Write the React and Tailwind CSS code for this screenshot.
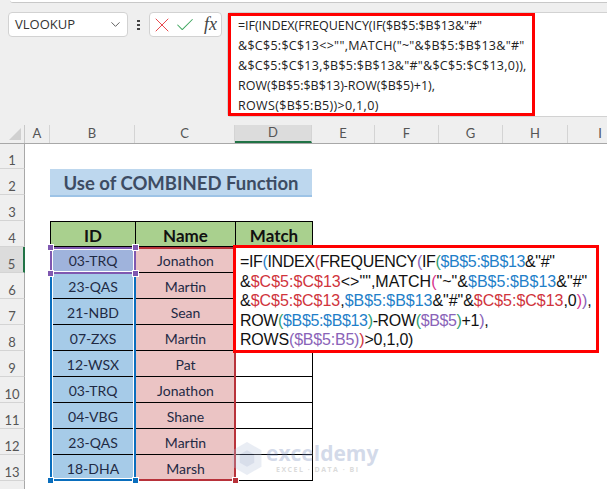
import React from "react";
import { ChevronDown, X, Check } from "lucide-react";

const colHeaders = [
  { label: "A", w: "w-[25px]" },
  { label: "B", w: "w-[85px]" },
  { label: "C", w: "w-[100px]" },
  { label: "D", w: "w-[77px]", active: true },
  { label: "E", w: "w-[63px]" },
  { label: "F", w: "w-[64px]" },
  { label: "G", w: "w-[64px]" },
  { label: "H", w: "w-[65px]" },
  { label: "I", w: "w-[65px]" },
];

const people = [
  ["03-TRQ", "Jonathon"],
  ["23-QAS", "Martin"],
  ["21-NBD", "Sean"],
  ["07-ZXS", "Martin"],
  ["12-WSX", "Pat"],
  ["03-TRQ", "Jonathon"],
  ["04-VBG", "Shane"],
  ["23-QAS", "Martin"],
  ["18-DHA", "Marsh"],
];

const blue = "text-[#1f7fc9]";
const red = "text-[#d0343c]";
const purple = "text-[#8a63b8]";
const green = "text-[#2f9e6e]";
const pink = "text-[#d6308c]";

const barTracks = ["tracking-[-0.05px]", "tracking-[0.28px]", "tracking-[0.27px]", "tracking-[0px]", "tracking-[0.33px]"];
const boxTracks = ["tracking-[-0.35px]", "tracking-[0.02px]", "tracking-[-0.03px]", "tracking-[-0.35px]", "tracking-[-0.2px]"];

// same formula is used in the bar and in the cell box
const Formula = ({ colored, tracks }) => {
  const c = (cls) => (colored ? cls : "");
  return (
    <>
      <div className={tracks[0]}>
        =IF<span className={c(blue)}>(</span>INDEX<span className={c(red)}>(</span>FREQUENCY
        <span className={c(purple)}>(</span>IF<span className={c(green)}>(</span>
        <span className={c(blue)}>$B$5:$B$13</span>&"#"
      </div>
      <div className={tracks[1]}>
        &<span className={c(red)}>$C$5:$C$13</span>&lt;&gt;"",MATCH<span className={c(pink)}>(</span>"~"&
        <span className={c(blue)}>$B$5:$B$13</span>&"#"
      </div>
      <div className={tracks[2]}>
        &<span className={c(red)}>$C$5:$C$13</span>,<span className={c(blue)}>$B$5:$B$13</span>&"#"&
        <span className={c(red)}>$C$5:$C$13</span>,0<span className={c(pink)}>)</span>
        <span className={c(purple)}>)</span>,
      </div>
      <div className={tracks[3]}>
        ROW<span className={c(green)}>(</span>
        <span className={c(blue)}>$B$5:$B$13</span>
        <span className={c(green)}>)</span>-ROW<span className={c(green)}>(</span>
        <span className={c(purple)}>$B$5</span>
        <span className={c(green)}>)</span>+1<span className={c(purple)}>)</span>,
      </div>
      <div className={tracks[4]}>
        ROWS<span className={c(purple)}>(</span>
        <span className={c(purple)}>$B$5:B5</span>
        <span className={c(purple)}>)</span>
        <span className={c(red)}>)</span>&gt;0,1,0)
      </div>
    </>
  );
};

const RowHead = ({ n, h, active }) => (
  <div
    className={`w-[25px] shrink-0 ${h} flex items-center justify-center pt-[10px] border-b border-[#d4d4d4] border-r text-[13px] text-[#555] ${
      active ? "bg-[#dcdcdc] border-r-2 border-r-[#217346]" : "bg-[#efefef] border-r-[#a8a8a8]"
    }`}
  >
    {n}
  </div>
);

const Handle = ({ className, color }) => (
  <div className={`absolute w-[5px] h-[5px] border border-white box-content ${color} ${className}`} />
);

const App = () => {
  return (
    <div className="w-[607px] h-[489px] overflow-hidden bg-white font-['Lato',sans-serif] relative">
      {/* Formula bar */}
      <div className="h-[125px] bg-[#efefef] relative">
        <div className="h-[3px] ml-[10px] bg-white border-b border-[#c8c8c8] rounded-bl" />
        <div className="flex items-start pt-[9px] pl-[8px]">
          <div className="w-[120px] h-[25px] bg-white border border-[#d2d2d2] rounded flex items-center justify-between pl-[6px] pr-[4px] font-['Open_Sans',sans-serif] text-[13px] text-[#333]">
            VLOOKUP
            <ChevronDown className="w-[15px] h-[15px] text-[#555]" strokeWidth={1.5} />
          </div>
          <div className="w-[21px] h-[25px] flex flex-col items-center justify-center gap-[2px]">
            <span className="w-[3px] h-[2px] bg-[#444]" />
            <span className="w-[3px] h-[2px] bg-[#444]" />
            <span className="w-[3px] h-[2px] bg-[#444]" />
          </div>
          <div className="w-[73px] h-[25px] bg-white border border-[#d2d2d2] rounded flex items-center">
            <X className="w-[24px] h-[24px] text-[#e8474c]" strokeWidth={1} />
            <Check className="w-[22px] h-[22px] text-[#3ea65f]" strokeWidth={1.1} />
            <span className="ml-[8px] font-['Liberation_Serif',serif] italic text-[18px] text-[#444]">fx</span>
          </div>
          <div className="ml-[5px] flex-1 h-[105px] bg-white border-y border-l border-[#d2d2d2] rounded-l">
            <div className="w-[307px] h-[103px] border-[3px] border-[#ff0000] pl-[7px] font-['Open_Sans',sans-serif] text-[12.5px] leading-[20px] text-[#222] whitespace-nowrap">
              <Formula colored={false} tracks={barTracks} />
            </div>
          </div>
        </div>
      </div>

      {/* Column headers */}
      <div className="flex h-[19px] bg-[#efefef] border-b border-[#a8a8a8] text-[13px] text-[#555]">
        <div className="w-[25px] shrink-0 border-r border-[#c8c8c8] relative overflow-hidden">
          <div className="absolute right-[3px] bottom-[3px] w-0 h-0 border-l-[12px] border-l-transparent border-b-[12px] border-b-[#d0d0d0]" />
        </div>
        {colHeaders.map((col) => (
          <div
            key={col.label}
            className={`${col.w} shrink-0 flex items-center justify-center border-r border-[#d4d4d4] ${
              col.active ? "bg-[#dcdcdc] border-b-2 border-b-[#217346]" : ""
            }`}
          >
            {col.label}
          </div>
        ))}
      </div>

      {/* Sheet */}
      <div className="relative">
        <div className="flex">
          <RowHead n={1} h="h-[25px]" />
        </div>
        <div className="flex h-[26px] items-start">
          <RowHead n={2} h="h-[26px]" />
          <div className="ml-[25px] w-[262px] h-[28px] pt-[3px] bg-[#bdd7ee] border-b-2 border-[#9dc3e6] flex items-center justify-center font-bold text-[18.5px] text-[#3d4c63] relative z-10">
            Use of COMBINED Function
          </div>
        </div>
        <div className="flex">
          <RowHead n={3} h="h-[26px]" />
        </div>
        <div className="flex">
          <RowHead n={4} h="h-[26px]" />
          <div className="ml-[25px] flex h-[26px] font-bold text-[17px] text-[#111]">
            <div className="w-[86px] pt-[3px] bg-[#a9d08e] border border-black flex items-center justify-center">ID</div>
            <div className="w-[100px] pt-[3px] bg-[#a9d08e] border-y border-r border-black flex items-center justify-center">Name</div>
            <div className="w-[77px] pt-[3px] bg-[#a9d08e] border-y border-r border-black flex items-center justify-center">Match</div>
          </div>
        </div>
        {people.map(([id, name], i) => (
          <div className="flex" key={i}>
            <RowHead n={i + 5} h="h-[26px]" active={i === 0} />
            <div className="ml-[25px] flex h-[26px] text-[14px] text-[#1f2a44]">
              <div className={`w-[86px] pt-[2px] border-x border-b border-black flex items-center justify-center ${i === 0 ? "bg-[#9fb3dc]" : "bg-[#a6cbe8]"}`}>
                {id}
              </div>
              <div className="w-[100px] pt-[2px] bg-[#ebc4c4] border-r border-b border-black flex items-center justify-center">
                {name}
              </div>
              <div className="w-[77px] bg-white border-r border-b border-black" />
            </div>
          </div>
        ))}
        <div className="flex">
          <RowHead n="" h="h-[10px]" />
        </div>

        {/* Range highlights */}
        <div className="absolute left-[50px] top-[103px] w-[86px] h-[234px] border-2 border-[#0a6ebd] shadow-[inset_0_0_0_1px_white]" />
        <div className="absolute left-[136px] top-[103px] w-[100px] h-[234px] border-2 border-[#b8323a] border-l-0" />
        <div className="absolute left-[50px] top-[103px] w-[86px] h-[27px] border-2 border-[#7f58b0] shadow-[inset_0_0_0_1px_white]" />
        <Handle className="left-[47px] top-[100px]" color="bg-[#7f58b0]" />
        <Handle className="left-[132px] top-[100px]" color="bg-[#7f58b0]" />
        <Handle className="left-[47px] top-[126px]" color="bg-[#7f58b0]" />
        <Handle className="left-[132px] top-[126px]" color="bg-[#7f58b0]" />
        <Handle className="left-[47px] top-[333px]" color="bg-[#0a6ebd]" />
        <Handle className="left-[132px] top-[333px]" color="bg-[#0a6ebd]" />
        <Handle className="left-[232px] top-[333px]" color="bg-[#b8323a]" />

        {/* Watermark */}
        <div className="absolute left-[232px] top-[298px] flex items-center gap-[4px] opacity-30 pointer-events-none">
          <svg width="30" height="33" viewBox="0 0 28 32">
            <path d="M14 0 L28 8 V24 L14 32 L0 24 V8 Z" fill="#b8c4de" />
            <path d="M14 8 L21 12 V20 L14 24 L7 20 V12 Z" fill="#7f93bd" />
          </svg>
          <div className="flex flex-col gap-[3px]">
            <span className="font-['Open_Sans',sans-serif] font-bold text-[21px] leading-[20px] text-[#6f86b8]">exceldemy</span>
            <span className="ml-[10px] font-['Open_Sans',sans-serif] font-bold text-[7px] leading-[8px] tracking-[1.5px] text-[#8a8a8a]">EXCEL · DATA · BI</span>
          </div>
        </div>

        {/* Formula shown in cell */}
        <div className="absolute left-[233px] top-[101px] w-[366px] h-[108px] border-[3px] border-[#ff0000] bg-white pl-[4px] pt-[4px] font-['Liberation_Sans',sans-serif] text-[16px] leading-[19.5px] text-[#111] whitespace-nowrap z-20">
          <Formula colored tracks={boxTracks} />
        </div>
      </div>
    </div>
  );
};

export default App;
